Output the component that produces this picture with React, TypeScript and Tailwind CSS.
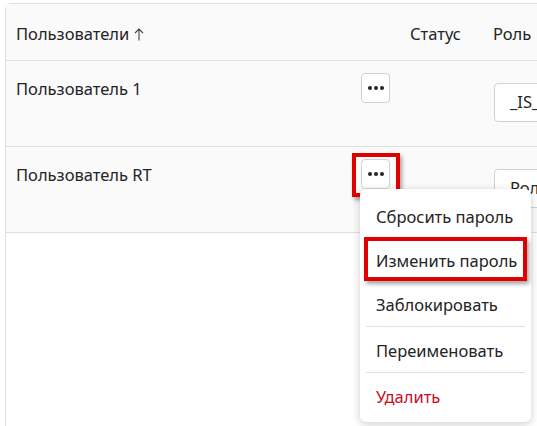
import React from "react";

const font = { fontFamily: '"Noto Sans", "Open Sans", sans-serif' };

function DotsButton() {
  return (
    <button
      type="button"
      className="flex h-[30px] w-[29px] items-center justify-center gap-[2px] rounded-[4px] border border-[#d1d1d1] bg-white"
    >
      <span className="h-[4px] w-[4px] rounded-full bg-[#242424]" />
      <span className="h-[4px] w-[4px] rounded-full bg-[#242424]" />
      <span className="h-[4px] w-[4px] rounded-full bg-[#242424]" />
    </button>
  );
}

function RoleSelect({ value }: { value: string }) {
  return (
    <div className="flex h-[39px] w-[120px] items-center rounded-[4px] border border-[#d1d1d1] bg-white pl-[15px] text-[16.5px] text-[#242424]">
      {value}
    </div>
  );
}

const users = [
  { name: "Пользователь 1", role: "_IS_ADMIN" },
  { name: "Пользователь RT", role: "Роль" },
];

const menuItems = [
  { label: "Сбросить пароль" },
  { label: "Изменить пароль" },
  { label: "Заблокировать", divider: true },
  { label: "Переименовать", divider: true },
  { label: "Удалить", danger: true },
];

export default function App() {
  return (
    <div
      className="relative h-[426px] w-[537px] overflow-hidden bg-white pl-[5px] pt-[3px] text-[#242424]"
      style={font}
    >
      <div className="h-[460px] w-[620px] rounded-tl-[6px] border-l border-t border-[#e0e0e0] bg-white">
        {/* header */}
        <div className="flex h-[57px] items-center border-b border-[#e0e0e0] bg-[#fafafa] pt-[4px] text-[16.5px]">
          <div className="flex w-[394px] items-center gap-[5px] pl-[10px]">
            Пользователи
            <svg width="10" height="13" viewBox="0 0 10 13" fill="none" stroke="#424242" strokeWidth="1.1">
              <path d="M5 12.5V1M1 5l4-4 4 4" />
            </svg>
          </div>
          <div className="w-[83px] pl-[10px]">Статус</div>
          <div className="pl-[10px]">Роль</div>
        </div>

        {users.map((user) => (
          <div
            key={user.name}
            className="flex h-[86px] items-start border-b border-[#e0e0e0] bg-[#fafafa]"
          >
            <div className="w-[355px] pl-[10px] pt-[16px] text-[16.5px]">{user.name}</div>
            <div className="pt-[12px]">
              <DotsButton />
            </div>
            <div className="ml-[104px] pt-[22px]">
              <RoleSelect value={user.role} />
            </div>
          </div>
        ))}
      </div>

      {/* highlight around the row actions button */}
      <div className="absolute left-[352px] top-[153px] h-[44px] w-[48px] border-[4px] border-[#e00000] shadow-[2px_3px_4px_rgba(0,0,0,0.35)]" />

      {/* context menu */}
      <div className="absolute left-[360px] top-[189px] w-[171px] rounded-[6px] bg-white pb-[5px] pt-[4px] shadow-[0_2px_8px_rgba(0,0,0,0.2)]">
        {menuItems.map((item) => (
          <div key={item.label}>
            <div
              className={`flex h-[44px] items-center pl-[16px] pt-[4px] text-[16.5px] ${
                item.danger ? "text-[#c50f1f]" : "text-[#242424]"
              }`}
            >
              {item.label}
            </div>
            {item.divider && <div className="mx-[6px] mt-[1px] h-px bg-[#e0e0e0]" />}
          </div>
        ))}
      </div>

      {/* highlight around "Изменить пароль" */}
      <div className="absolute left-[364px] top-[237px] h-[44px] w-[163px] border-[4px] border-[#e00000] shadow-[2px_3px_4px_rgba(0,0,0,0.35)]" />
    </div>
  );
}
